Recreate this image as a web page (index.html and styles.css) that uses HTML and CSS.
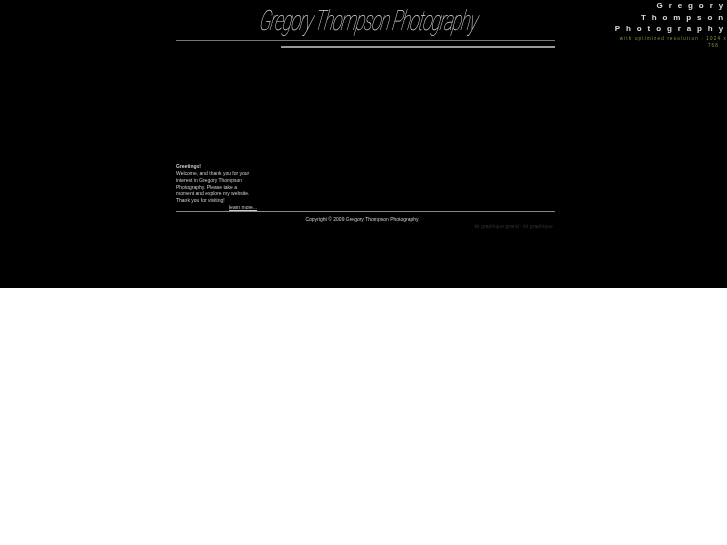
FILE: index.html
```html
<!DOCTYPE html>
<html lang="en">
<head>
<meta charset="utf-8">
<title>Gregory Thompson Photography</title>
<link rel="stylesheet" href="styles.css">
</head>
<body>
<div class="page">
  <div class="gutter"></div>
  <main class="main">
    <header class="logo"><span class="logo-text">Gregory Thompson Photography</span></header>
    <div class="rule-top"></div>
    <div class="rule-sub"></div>
    <section class="intro">
      <p><strong>Greetings!</strong></p>
      <p>Welcome, and thank you for your interest in Gregory Thompson Photography. Please take a moment and explore my website. Thank you for visiting!</p>
      <a class="more" href="#">learn more...</a>
    </section>
    <div class="rule-bottom"></div>
    <p class="copyright">Copyright © 2009 Gregory Thompson Photography.</p>
    <p class="credit">kii graphique grand : kii graphique</p>
  </main>
  <aside class="side">
    <h1 class="side-title">Gregory Thompson Photography</h1>
    <p class="side-note">with optimized resolution : 1024 x <span class="side-note-end">768</span></p>
  </aside>
</div>
</body>
</html>
```
FILE: styles.css
```css
html, body { margin: 0; padding: 0; background: #fff; }
p, h1 { margin: 0; }
.page {
  display: flex;
  height: 288px;
  background: #000;
  color: #ccc;
  font-family: "Liberation Sans", Arial, sans-serif;
  font-size: 5px;
  overflow: hidden;
  will-change: transform;
}
.gutter { width: 176px; flex: none; }
.main { width: 379px; flex: none; display: flex; flex-direction: column; }
.logo {
  height: 40px;
  display: flex;
  justify-content: center;
  align-items: center;
  padding-left: 6px;
  box-sizing: border-box;
  font-family: Roboto, sans-serif;
  font-weight: 100;
  font-style: italic;
  font-size: 28px;
  letter-spacing: -1.6px;
  white-space: nowrap;
  color: #ddd;
}
.logo-text { display: block; transform: skewX(-10deg) scaleX(0.64); }
.rule-top { height: 1px; background: #777; }
.rule-sub { height: 2px; margin: 5px 0 0 105px; background: #999; }
.intro { margin-top: 115px; width: 78px; height: 48px; line-height: 6.85px; position: relative; }
.more { position: absolute; left: 53px; top: 41px; color: #ccc; white-space: nowrap; }
.rule-bottom { height: 1px; background: #888; }
.copyright { margin-top: 4px; padding-right: 6px; text-align: center; line-height: 7px; }
.credit { padding: 0 2px; text-align: right; color: #333; line-height: 7px; letter-spacing: 0.1px; }
.side { flex: none; width: 174px; box-sizing: border-box; padding-left: 56px; text-align: right; }
.side-title {
  font-size: 8px;
  font-weight: 700;
  line-height: 11.5px;
  letter-spacing: 5.9px;
  color: #ddd;
}
.side-note {
  margin-right: 2px;
  font-size: 4.5px;
  line-height: 7px;
  letter-spacing: 1.2px;
  color: #8a9a40;
  white-space: nowrap;
}
.side-note-end { display: block; padding-right: 8px; }
```
